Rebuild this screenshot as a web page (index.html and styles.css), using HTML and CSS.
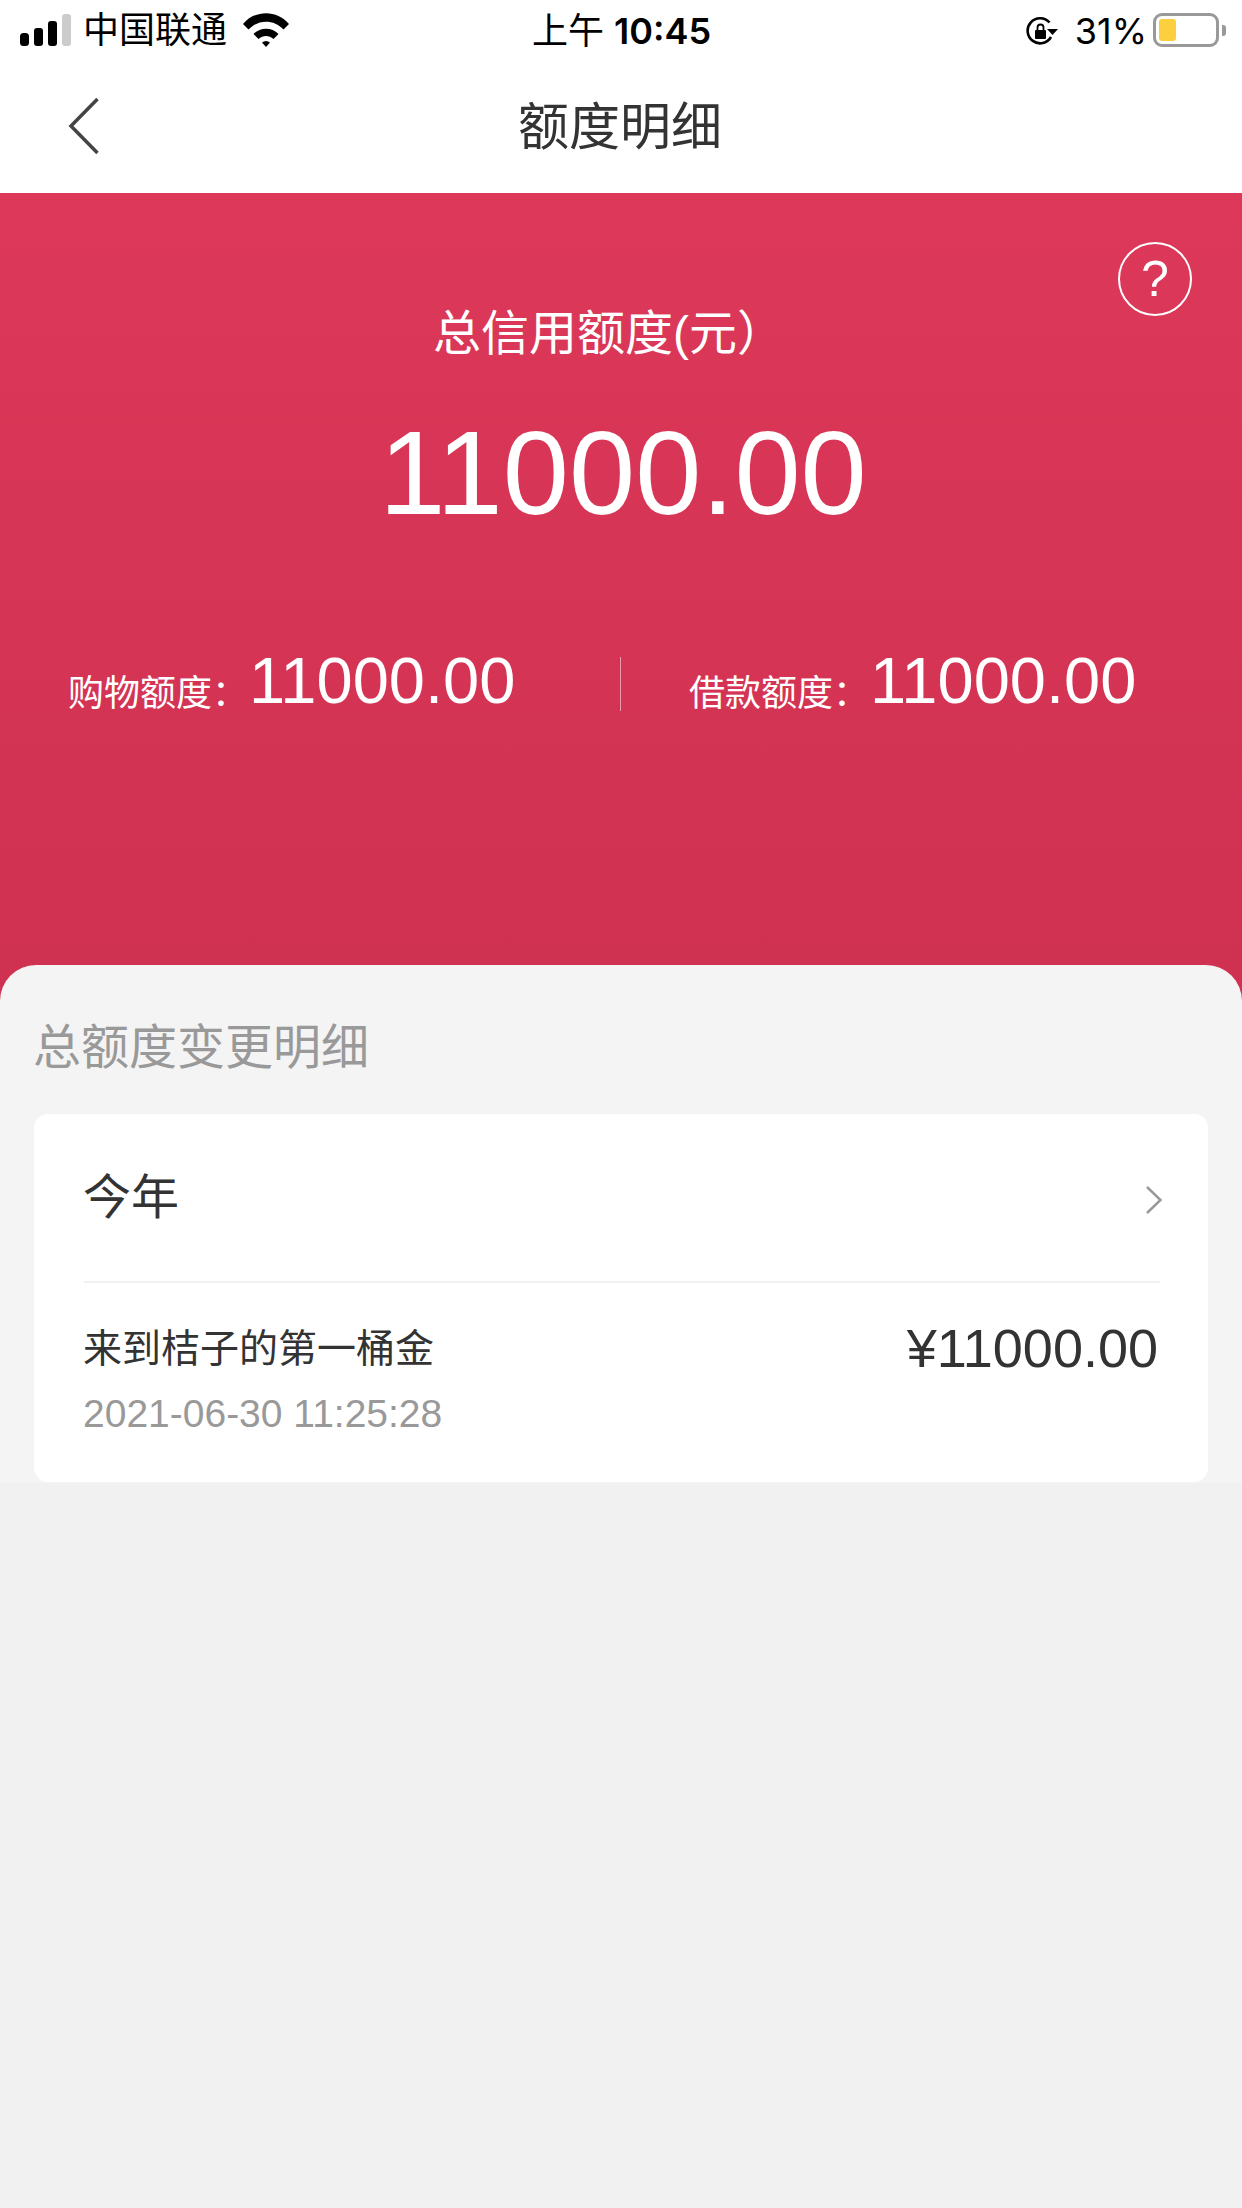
FILE: index.html
```html
<!DOCTYPE html>
<html lang="zh-CN">
<head>
    <meta charset="UTF-8">
    <meta name="viewport" content="width=device-width, initial-scale=1.0">
    <title>额度明细</title>
    <link rel="stylesheet" href="styles.css">
</head>
<body>
    <div class="status-bar">
        <div class="status-left">
            <svg class="signal" width="51" height="32" viewBox="0 0 51 32">
                <rect x="0" y="19" width="9" height="13" rx="3.500" fill="#000"/>
                <rect x="14" y="14" width="9" height="18" rx="3" fill="#000"/>
                <rect x="28" y="7" width="9" height="25" rx="3" fill="#000"/>
                <rect x="42" y="0" width="9" height="32" rx="3" fill="#ccc"/>
            </svg>
            <span class="carrier">中国联通</span>
            <svg class="wifi" width="46" height="34" viewBox="0 0 46 34">
                <path d="M0 11 C12 -3.500 34 -3.500 46 11 L40.500 16.500 C31 6 15 6 5.500 16.500 Z" fill="#000"/>
                <path d="M10.500 21 C17 14 29 14 35.500 21 L30.500 26 C26 22 20 22 15.500 26 Z" fill="#000"/>
                <path d="M19 29.500 C21.500 27.500 24.500 27.500 27 29.500 L23 34 Z" fill="#000"/>
            </svg>
        </div>
        <div class="status-time">上午 <span class="status-clock">10:45</span></div>
        <div class="status-right">
            <svg class="lock" width="32" height="28" viewBox="0 0 32 28">
                <path d="M23.500 5.500 A12.500 12.500 0 1 0 25 20" fill="none" stroke="#000" stroke-width="2.600"/>
                <path d="M21 12 L32 12 L26.500 18 Z" fill="#000"/>
                <rect x="9" y="13" width="11" height="9" rx="1" fill="#000"/>
                <path d="M11.500 13 V10.500 A3 3 0 0 1 17.500 10.500 V13" fill="none" stroke="#000" stroke-width="1.800"/>
            </svg>
            <span class="battery-text">31%</span>
            <div class="battery">
                <div class="battery-level"></div>
            </div>
            <div class="battery-cap"></div>
        </div>
    </div>

    <div class="nav-bar">
        <svg class="back" width="32" height="58" viewBox="0 0 32 58">
            <path d="M29.500 2 L3 29 L29.500 56" fill="none" stroke="#444" stroke-width="3.500"/>
        </svg>
        <h1>额度明细</h1>
    </div>

    <div class="hero">
        <div class="help">?</div>
        <div class="hero-label">总信用额度(元）</div>
        <div class="hero-total">11000.00</div>
        <div class="quota-row">
            <div class="quota">
                <span class="quota-name">购物额度：</span>
                <span class="quota-value">11000.00</span>
            </div>
            <div class="quota quota-second">
                <span class="quota-name">借款额度：</span>
                <span class="quota-value">11000.00</span>
            </div>
        </div>
    </div>

    <div class="sheet">
        <div class="sheet-title">总额度变更明细</div>
        <div class="card">
            <div class="year-row">
                <span class="year">今年</span>
                <svg class="arrow" width="18" height="30" viewBox="0 0 18 30">
                    <path d="M2 2 L15.500 15 L2 28" fill="none" stroke="#999" stroke-width="2.500"/>
                </svg>
            </div>
            <div class="record">
                <div class="record-info">
                    <div class="record-name">来到桔子的第一桶金</div>
                    <div class="record-date">2021-06-30 11:25:28</div>
                </div>
                <div class="record-amount">¥11000.00</div>
            </div>
        </div>
    </div>
</body>
</html>
```

FILE: styles.css
```css
* {
    box-sizing: border-box;
}
html, body {
    height: 100%;
}
body {
    margin: 0;
    background-color: #f1f1f1;
    font-family: "Liberation Sans", "Noto Sans CJK SC", sans-serif;
    overflow: hidden;
}

/* status bar */
.status-bar {
    display: grid;
    grid-template-columns: 1fr auto 1fr;
    align-items: center;
    height: 57px;
    padding: 3px 16px 0 20px;
    background-color: #fff;
    color: #000;
}
.status-left {
    display: flex;
    align-items: center;
}
.signal {
    margin-right: 12px;
}
.carrier {
    font-size: 36px;
    line-height: 40px;
    padding-top: 2px;
    margin-right: 16px;
}
.wifi {
    margin-top: -1px;
}
.status-time {
    padding: 2px 3px 0 0;
    font-family: Inter, "Noto Sans CJK SC", sans-serif;
    font-size: 36px;
    line-height: 40px;
}
.status-clock {
    font-weight: 600;
}
.status-right {
    display: flex;
    align-items: center;
    justify-content: flex-end;
}
.lock {
    margin: 2px 17px 0 0;
}
.battery-text {
    padding-top: 2px;
    font-family: Inter, sans-serif;
    font-size: 36px;
    line-height: 40px;
    margin-right: 6px;
}
.battery {
    width: 66px;
    height: 34px;
    padding: 3px 3px;
    border: 3px solid #999;
    border-radius: 9px;
}
.battery-level {
    width: 17px;
    height: 100%;
    border-radius: 3px;
    background-color: #fbcf3e;
}
.battery-cap {
    width: 4px;
    height: 11px;
    margin-left: 3px;
    border-radius: 0 3px 3px 0;
    background-color: #999;
}

/* nav bar */
.nav-bar {
    display: flex;
    align-items: center;
    justify-content: center;
    position: relative;
    height: 136px;
    padding: 0 2px 4px 0;
    background-color: #fff;
}
.back {
    position: absolute;
    left: 68px;
    top: 40px;
}
h1 {
    margin: 0;
    font-size: 51px;
    font-weight: 400;
    color: #333;
}

/* red part */
.hero {
    position: relative;
    height: 808px;
    padding-top: 109px;
    background: linear-gradient(#dd3859, #cf3151);
    color: #fff;
    text-align: center;
}
.help {
    position: absolute;
    top: 49px;
    right: 50px;
    width: 74px;
    height: 74px;
    border: 2px solid #fff;
    border-radius: 50%;
    font-size: 50px;
    line-height: 70px;
}
.hero-label {
    padding-right: 24px;
    font-size: 48px;
    line-height: 64px;
}
.hero-total {
    margin-top: 32px;
    padding-left: 4px;
    font-size: 119px;
    line-height: 150px;
}
.quota-row {
    display: grid;
    grid-template-columns: 620px 1fr;
    margin-top: 109px;
}
.quota {
    display: flex;
    align-items: flex-start;
    height: 54px;
    padding-left: 68px;
    line-height: 46px;
    white-space: nowrap;
}
.quota-second {
    border-left: 1px solid rgba(255, 255, 255, 0.5);
}
.quota-name {
    margin: 14px 1px 0 0;
    font-size: 36px;
}
.quota-value {
    margin-top: 1px;
    font-size: 65px;
}

/* white sheet */
.sheet {
    height: 518px;
    margin-top: -36px;
    position: relative;
    padding: 0 34px;
    border-radius: 36px 36px 0 0;
    background-color: #f4f4f4;
}
.sheet-title {
    margin-left: -1px;
    padding-top: 50px;
    font-size: 48px;
    line-height: 66px;
    color: #999;
}
.card {
    margin-top: 33px;
    height: 368px;
    padding: 0 48px 0 50px;
    border-radius: 14px;
    background-color: #fff;
}
.year-row {
    display: flex;
    align-items: center;
    justify-content: space-between;
    height: 169px;
    border-bottom: 2px solid #f1f1f1;
}
.year {
    margin: 0 0 10px -1px;
    font-size: 48px;
    color: #333;
}
.arrow {
    margin: 4px -3px 0 0;
}
.record {
    display: flex;
    justify-content: space-between;
}
.record-name {
    margin: 39px 0 0 -1px;
    font-size: 39px;
    line-height: 54px;
    color: #333;
}
.record-date {
    margin: 11px 0 0 -1px;
    font-size: 39px;
    line-height: 54px;
    color: #999;
}
.record-amount {
    margin-top: 33px;
    padding-right: 2px;
    font-size: 54px;
    line-height: 64px;
    color: #333;
}
```
